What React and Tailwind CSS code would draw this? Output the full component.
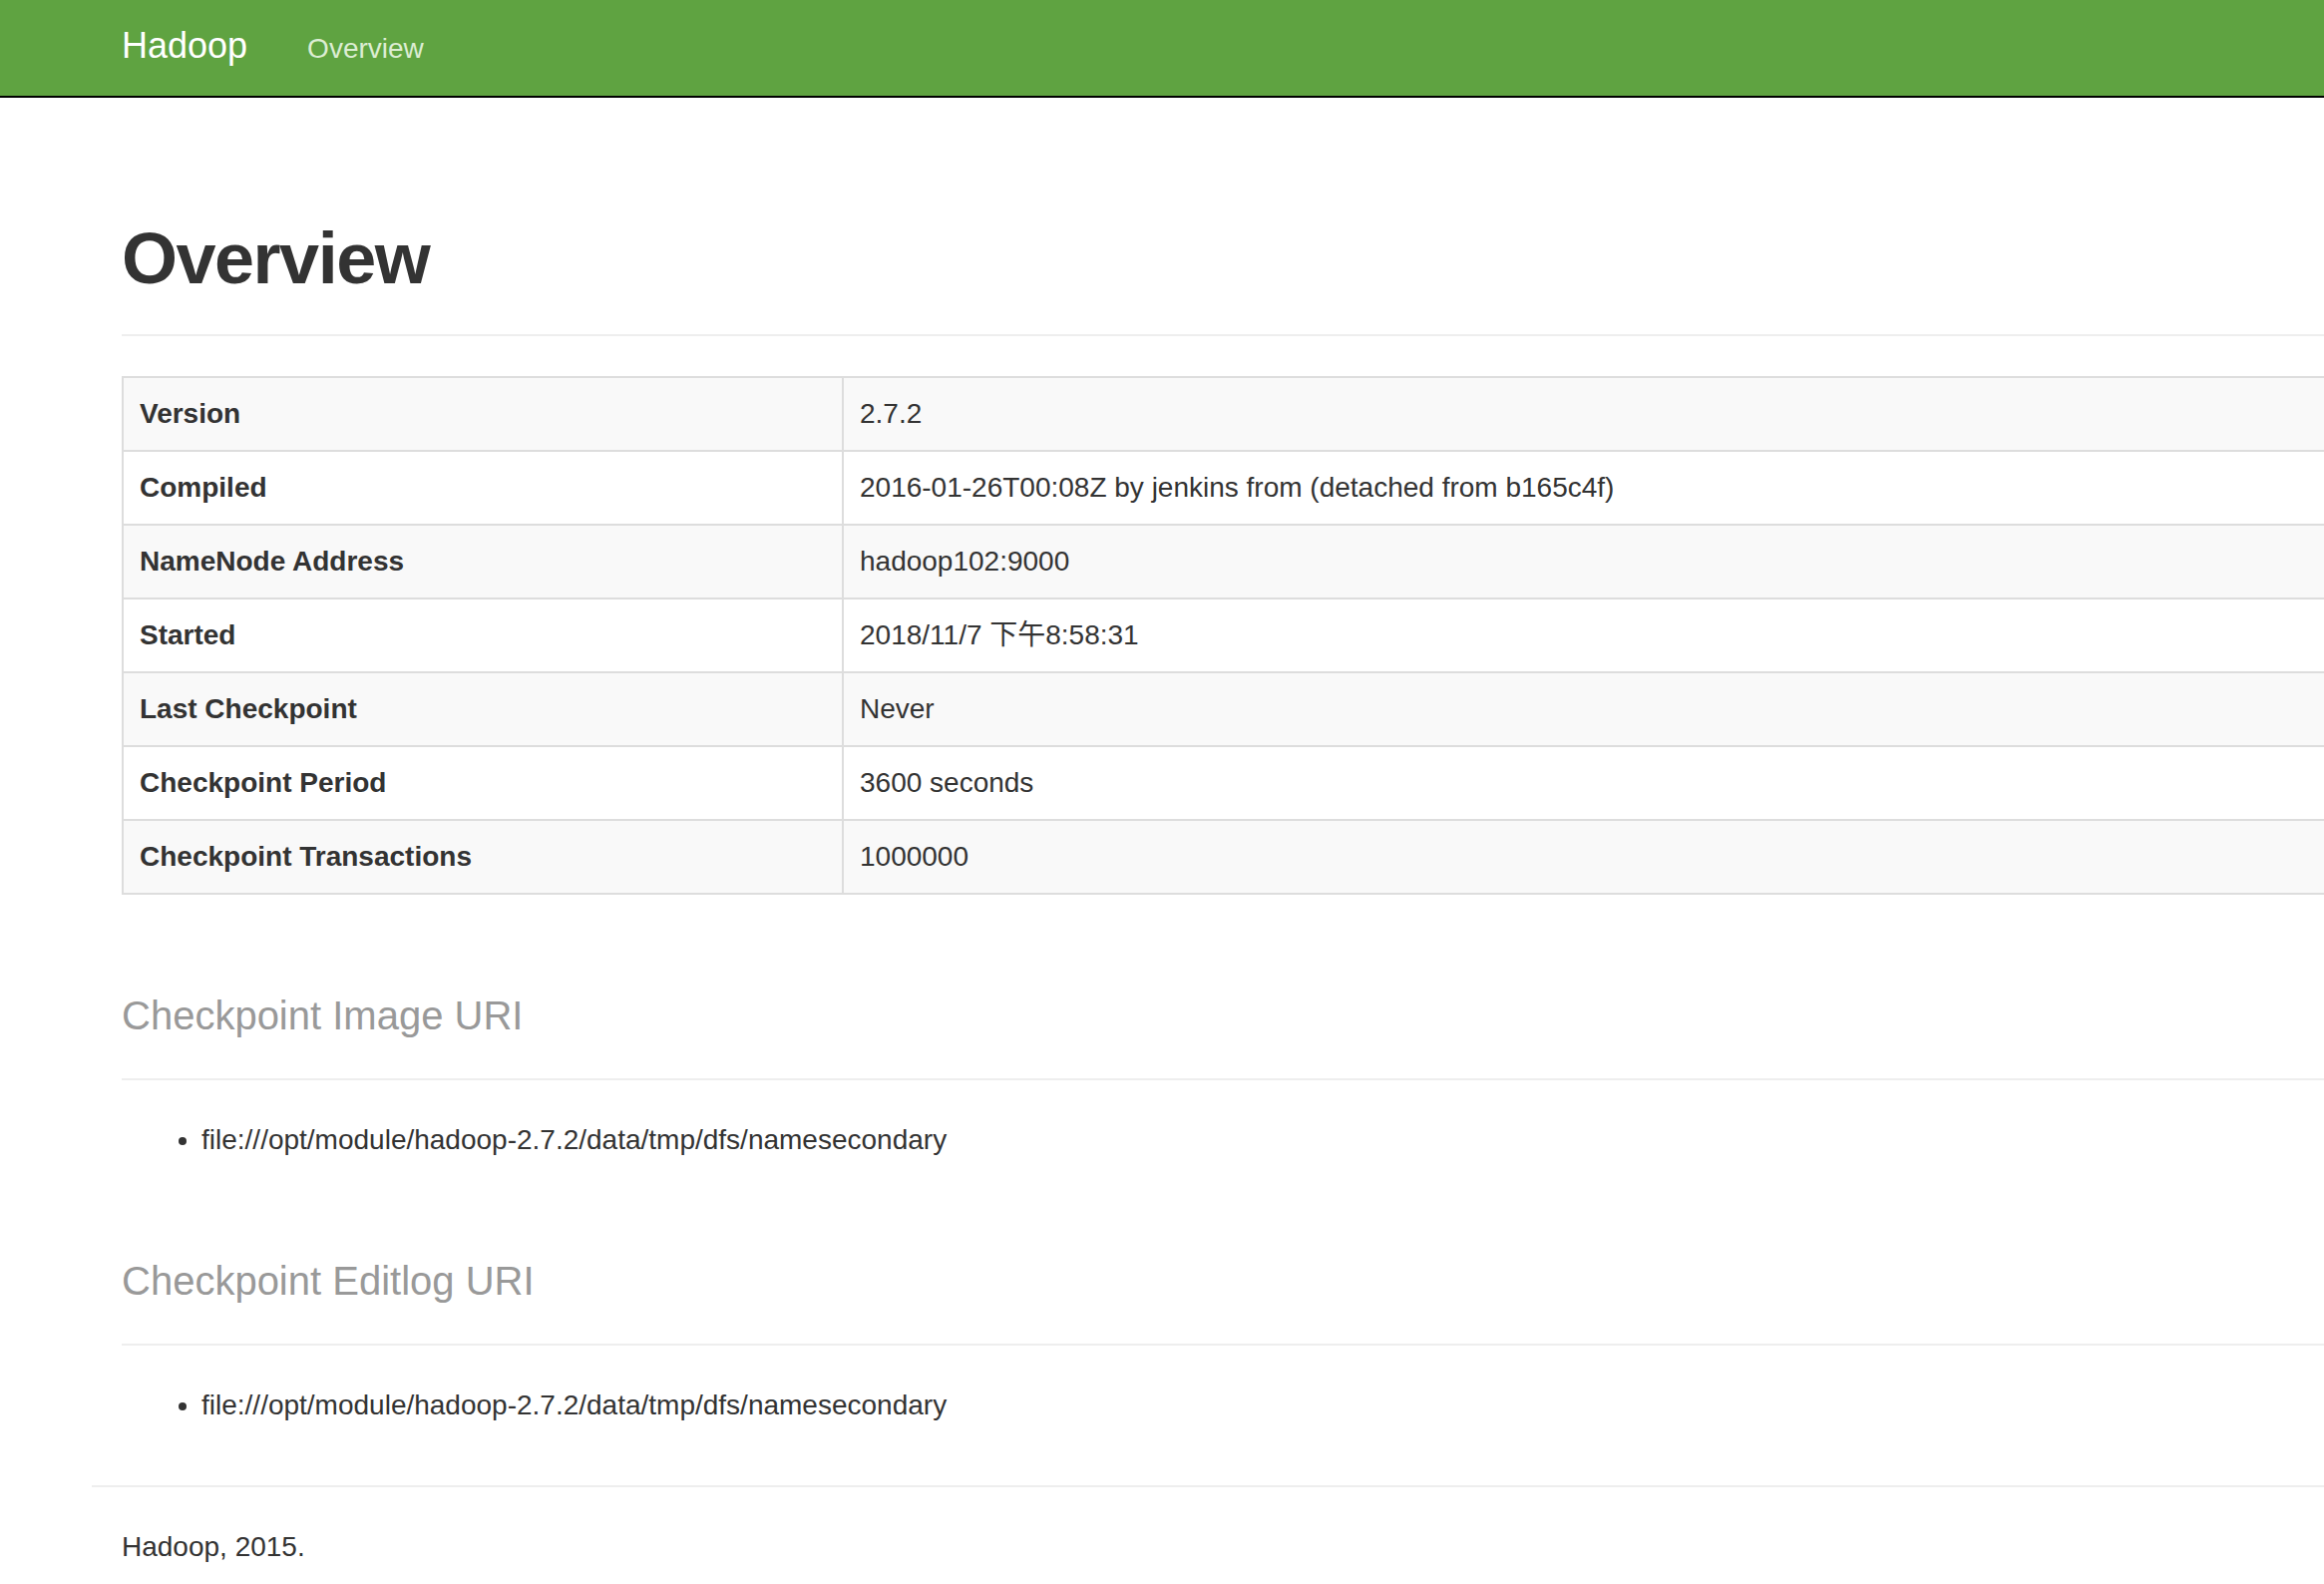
import React from 'react';

const rows = [
  ['Version', '2.7.2'],
  ['Compiled', '2016-01-26T00:08Z by jenkins from (detached from b165c4f)'],
  ['NameNode Address', 'hadoop102:9000'],
  ['Started', '2018/11/7 下午8:58:31'],
  ['Last Checkpoint', 'Never'],
  ['Checkpoint Period', '3600 seconds'],
  ['Checkpoint Transactions', '1000000'],
];

const uris = [
  ['Checkpoint Image URI', 'file:///opt/module/hadoop-2.7.2/data/tmp/dfs/namesecondary'],
  ['Checkpoint Editlog URI', 'file:///opt/module/hadoop-2.7.2/data/tmp/dfs/namesecondary'],
];

export default function App() {
  return (
    <div
      className="min-h-screen bg-white text-[#333] text-[28px] leading-[40px] overflow-hidden"
      style={{ fontFamily: '"Liberation Sans", "Noto Sans CJK SC", Arial, sans-serif' }}
    >
      {/* Navbar */}
      <header className="h-[98px] bg-[#5fa341] border-b-2 border-black">
        <div className="flex items-baseline pl-[122px] pt-[26px]">
          <span className="text-[36px] leading-[40px] text-white">Hadoop</span>
          <span className="ml-[60px] text-[28px] leading-[40px] text-[#dcedd3]">Overview</span>
        </div>
      </header>

      <main className="pl-[122px]">
        {/* Page header */}
        <div className="mt-[122px] pb-[36px] border-b-2 border-[#eee]">
          <h1 className="text-[72px] leading-[79px] font-bold tracking-[-1.5px] text-[#333]">Overview</h1>
        </div>

        {/* Info table */}
        <table className="mt-[40px] w-[2280px] border-collapse border-2 border-[#ddd]">
          <tbody>
            {rows.map(([k, v], i) => (
              <tr key={k} className={i % 2 === 0 ? 'bg-[#f9f9f9]' : 'bg-white'}>
                <th className="w-[722px] border-2 border-[#ddd] px-[16px] py-[16px] text-left font-bold">
                  {k}
                </th>
                <td className="border-2 border-[#ddd] px-[16px] py-[16px]">{v}</td>
              </tr>
            ))}
          </tbody>
        </table>

        {/* URI sections */}
        {uris.map(([title, path]) => (
          <section key={title}>
            <div className="mt-[100px] pb-[41px] border-b-2 border-[#eee]">
              <h2 className="text-[40px] leading-[43px] text-[#999]">{title}</h2>
            </div>
            <ul className="mt-[40px] pl-[80px] list-disc">
              <li>{path}</li>
            </ul>
          </section>
        ))}
      </main>

      {/* Footer */}
      <footer className="mt-[60px] pb-[40px]">
        <hr className="ml-[92px] border-0 border-t-2 border-[#eee]" />
        <p className="mt-[40px] pl-[122px]">Hadoop, 2015.</p>
      </footer>
    </div>
  );
}
